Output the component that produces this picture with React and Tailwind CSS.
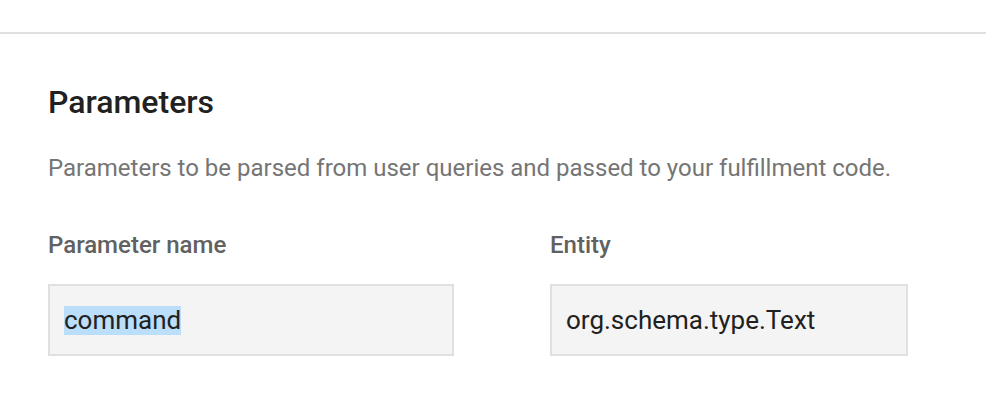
export default function App() {
  return (
    <div className="w-[986px] h-[420px] bg-white overflow-hidden" style={{ fontFamily: "Roboto, 'Liberation Sans', sans-serif" }}>
      <div className="h-[32px]" />
      <div className="h-[2px] bg-[#e0e0e0]" />
      <div className="pl-[48px] pt-[52px]">
        <h2 className="text-[32px] leading-[32px] font-medium text-[#212121]">Parameters</h2>
        <p className="mt-[34px] text-[24px] leading-[32px] text-[#757575]">
          Parameters to be parsed from user queries and passed to your fulfillment code.
        </p>
        <div className="mt-[45px] flex gap-[96px]">
          <div className="flex flex-col">
            <div className="text-[24px] leading-[32px] font-medium text-[#616161]">Parameter name</div>
            <div className="mt-[23px] w-[406px] h-[72px] border-2 border-[#e0e0e0] bg-[#f4f4f4] flex items-center pl-[14px]">
              <span className="text-[26px] leading-[29px] text-[#212121] bg-[#bbdefb]">command</span>
            </div>
          </div>
          <div className="flex flex-col">
            <div className="text-[24px] leading-[32px] font-medium text-[#616161]">Entity</div>
            <div className="mt-[23px] w-[358px] h-[72px] border-2 border-[#e0e0e0] bg-[#f4f4f4] flex items-center pl-[14px]">
              <span className="text-[26px] leading-[29px] text-[#212121]">org.schema.type.Text</span>
            </div>
          </div>
        </div>
      </div>
    </div>
  );
}
